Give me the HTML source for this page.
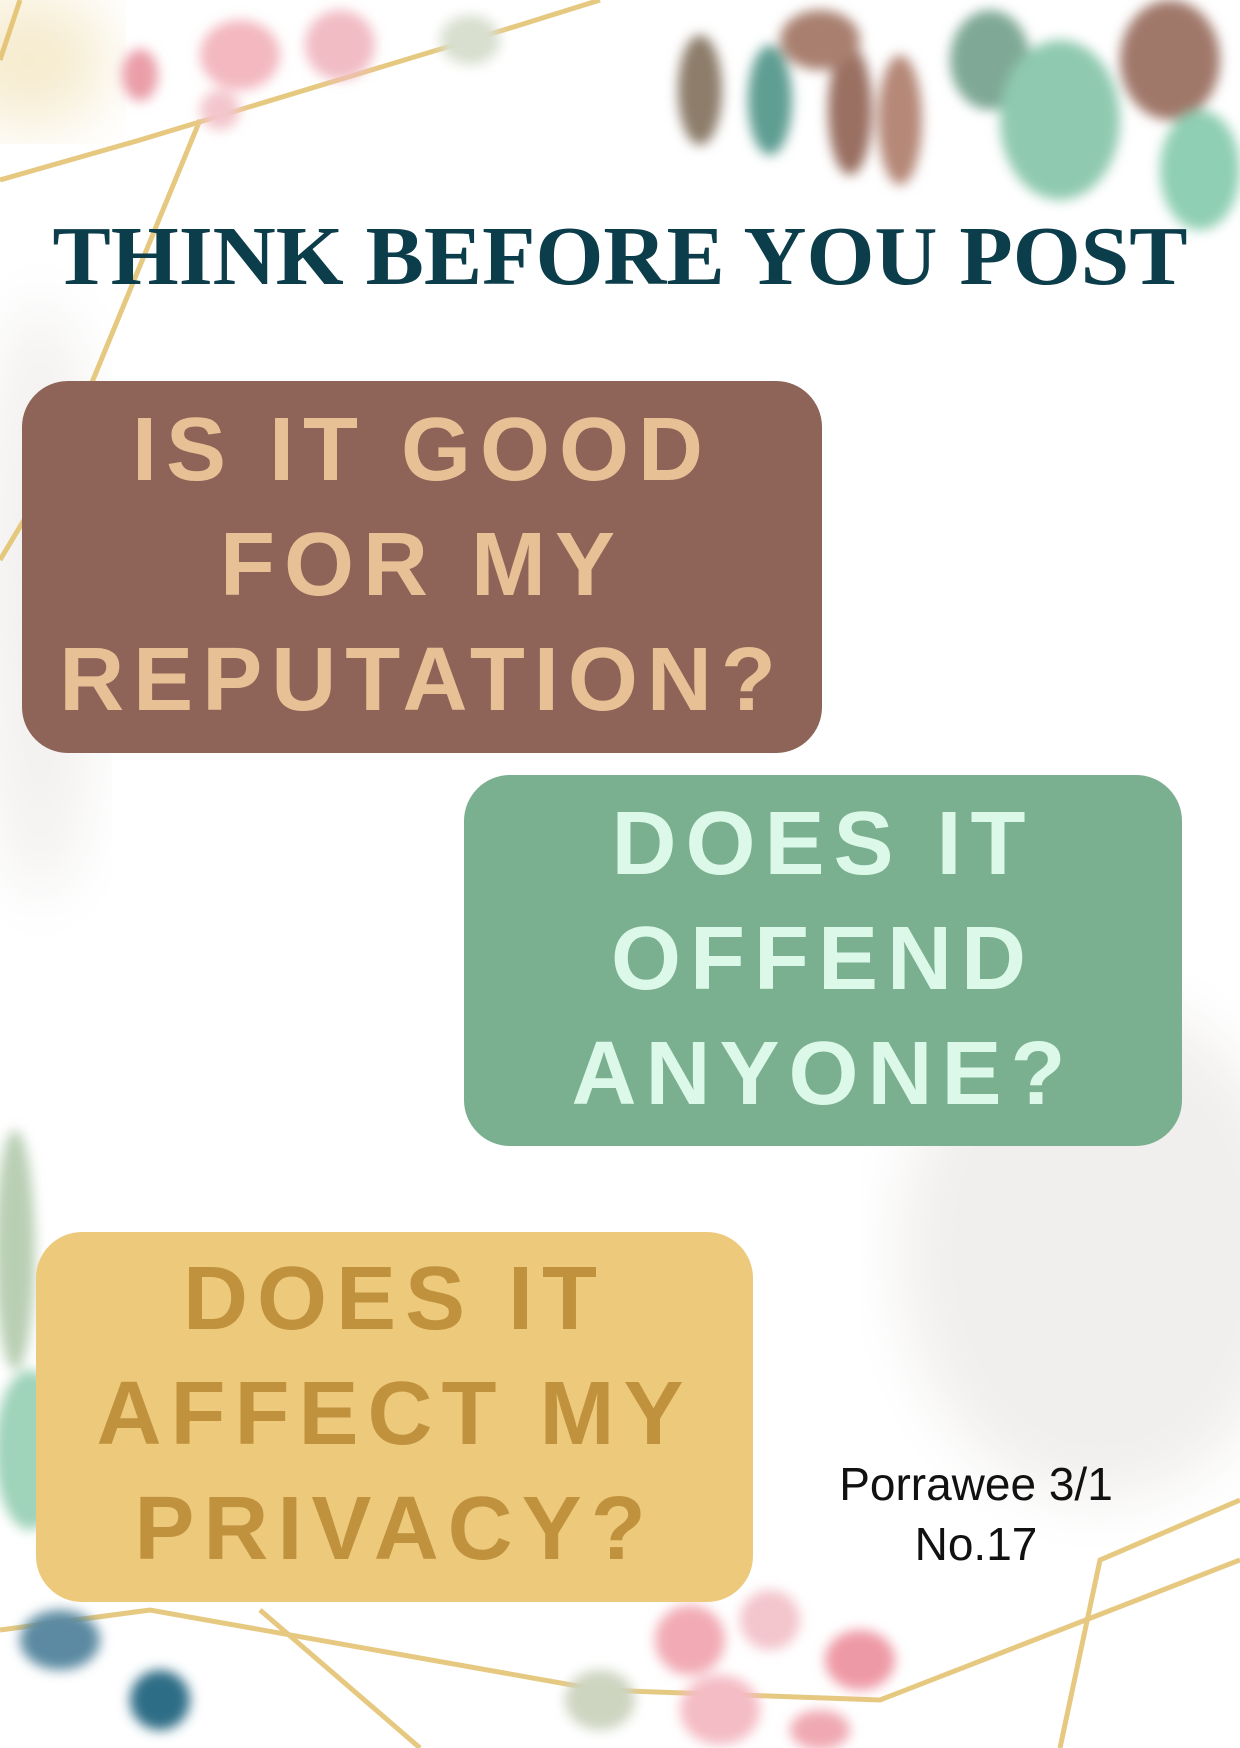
<!DOCTYPE html>
<html><head><meta charset="utf-8"><style>
html,body{margin:0;padding:0}
body{width:1240px;height:1748px;position:relative;overflow:hidden;background:#fff;font-family:"Liberation Sans",sans-serif}
.box{position:absolute;border-radius:46px;text-align:center;font-weight:bold;font-size:90px;letter-spacing:9px;line-height:115px;box-sizing:border-box}
.title{position:absolute;left:0;width:1240px;top:208px;text-align:center;font-family:"Liberation Serif",serif;font-weight:bold;font-size:84px;color:#0b3d4a;letter-spacing:0px;transform:scaleX(1.04)}
.sig{position:absolute;left:826px;width:300px;top:1454px;text-align:center;font-size:46px;line-height:60px;color:#111}
</style></head><body>
<svg width="1240" height="1748" style="position:absolute;left:0;top:0">
<defs><filter id="b"><feGaussianBlur stdDeviation="6"/></filter><filter id="b2"><feGaussianBlur stdDeviation="30"/></filter></defs>
<ellipse cx="30" cy="60" rx="80" ry="70" fill="#f6ecd0" filter="url(#b2)"/>
<ellipse cx="1100" cy="1250" rx="200" ry="250" fill="#f1efed" filter="url(#b2)"/>
<ellipse cx="40" cy="600" rx="60" ry="300" fill="#f3f1ef" filter="url(#b2)"/>
<g stroke="#e2bf6a" stroke-width="5" fill="none" opacity=".85">
<polyline points="0,180 140,140 520,25 600,0"/>
<polyline points="20,0 0,60"/>
<polyline points="200,120 60,460 0,560"/>
<polyline points="0,1630 150,1610 600,1690 880,1700 1240,1560"/>
<polyline points="260,1610 420,1748"/>
<polyline points="1240,1500 1100,1560 1060,1748"/>
</g>
<g filter="url(#b)">
<ellipse cx="240" cy="55" rx="40" ry="35" fill="#f3b8c0"/>
<ellipse cx="340" cy="45" rx="35" ry="35" fill="#f1bcc4"/>
<ellipse cx="140" cy="75" rx="18" ry="26" fill="#ea9ea8"/>
<ellipse cx="220" cy="110" rx="20" ry="20" fill="#f3c6cc"/>
<ellipse cx="470" cy="40" rx="30" ry="25" fill="#d8dfcf"/>
<ellipse cx="700" cy="90" rx="22" ry="55" fill="#8d7d6a"/>
<ellipse cx="770" cy="100" rx="22" ry="55" fill="#5f9e93"/>
<ellipse cx="850" cy="110" rx="22" ry="65" fill="#9a7062"/>
<ellipse cx="900" cy="120" rx="22" ry="65" fill="#b58878"/>
<ellipse cx="820" cy="40" rx="40" ry="30" fill="#a98070"/>
<ellipse cx="990" cy="60" rx="40" ry="50" fill="#7fa996"/>
<ellipse cx="1060" cy="120" rx="60" ry="80" fill="#8fc9b0"/>
<ellipse cx="1170" cy="60" rx="50" ry="60" fill="#a0786a"/>
<ellipse cx="1200" cy="170" rx="40" ry="60" fill="#8fcfb4"/>
<ellipse cx="15" cy="1250" rx="20" ry="120" fill="#b9cfb4"/>
<ellipse cx="30" cy="1450" rx="35" ry="80" fill="#9fd3ba"/>
<ellipse cx="60" cy="1640" rx="40" ry="30" fill="#5c8aa2"/>
<ellipse cx="160" cy="1700" rx="30" ry="30" fill="#2f6d86"/>
<ellipse cx="690" cy="1640" rx="35" ry="35" fill="#f2aab4"/>
<ellipse cx="770" cy="1620" rx="30" ry="30" fill="#f3c5cc"/>
<ellipse cx="860" cy="1660" rx="35" ry="30" fill="#ee9aa6"/>
<ellipse cx="720" cy="1710" rx="40" ry="35" fill="#f4bcc4"/>
<ellipse cx="600" cy="1700" rx="35" ry="30" fill="#cdd4c0"/>
<ellipse cx="820" cy="1730" rx="30" ry="20" fill="#f0a9b2"/>
</g>
</svg>
<div class="title">THINK BEFORE YOU POST</div>
<div class="box" style="left:22px;top:381px;width:800px;height:372px;background:#8d6457;color:#e8c096;padding-top:12px">IS IT GOOD<br>FOR MY<br>REPUTATION?</div>
<div class="box" style="left:464px;top:775px;width:718px;height:371px;background:#7aaf90;color:#dcf8e8;padding-top:12px">DOES IT<br>OFFEND<br>ANYONE?</div>
<div class="box" style="left:36px;top:1232px;width:717px;height:370px;background:#edc97c;color:#c1923e;padding-top:10px">DOES IT<br>AFFECT MY<br>PRIVACY?</div>
<div class="sig">Porrawee 3/1<br>No.17</div>
</body></html>
